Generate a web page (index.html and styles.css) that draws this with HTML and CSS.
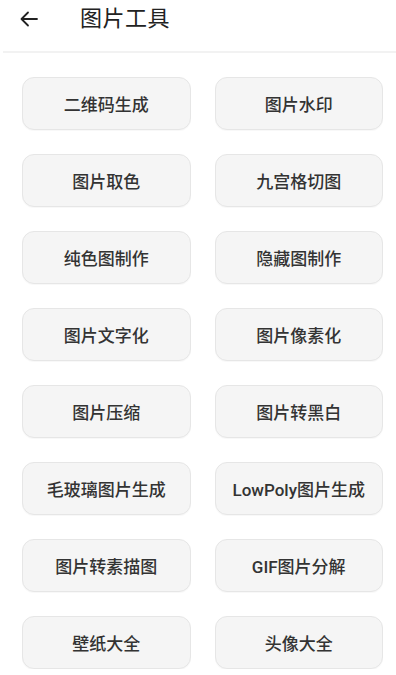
FILE: index.html
```html
<!DOCTYPE html>
<html lang="zh-CN">
<head>
<meta charset="utf-8">
<title>图片工具</title>
<link rel="stylesheet" href="styles.css">
</head>
<body>
<header class="topbar">
  <svg class="back" width="18" height="16" viewBox="0 0 18 16" aria-hidden="true">
    <path d="M17 8H2M8 1.5L1.5 8L8 14.5" fill="none" stroke="#222" stroke-width="1.8" stroke-linecap="round" stroke-linejoin="round"/>
  </svg>
  <h1 class="title">图片工具</h1>
</header>
<main class="grid">
  <button class="tool">二维码生成</button>
  <button class="tool">图片水印</button>
  <button class="tool">图片取色</button>
  <button class="tool">九宫格切图</button>
  <button class="tool">纯色图制作</button>
  <button class="tool">隐藏图制作</button>
  <button class="tool">图片文字化</button>
  <button class="tool">图片像素化</button>
  <button class="tool">图片压缩</button>
  <button class="tool">图片转黑白</button>
  <button class="tool">毛玻璃图片生成</button>
  <button class="tool">LowPoly图片生成</button>
  <button class="tool">图片转素描图</button>
  <button class="tool">GIF图片分解</button>
  <button class="tool">壁纸大全</button>
  <button class="tool">头像大全</button>
</main>
</body>
</html>
```

FILE: styles.css
```css
html, body {
  margin: 0;
  padding: 0;
  background: #ffffff;
  font-family: Roboto, "Noto Sans CJK SC", sans-serif;
}

.topbar {
  display: flex;
  align-items: center;
  padding-left: 20px;
  margin-left: 3px;
  border-bottom: 2px solid #f2f2f2;
  box-sizing: border-box;
  height: 53px;
  padding-bottom: 14px;
  padding-top: 0;
}

.back {
  display: block;
  margin-left: -3px;
  flex: none;
}

.title {
  margin: 0 0 0 42px;
  font-size: 22px;
  font-weight: 400;
  color: #222;
  line-height: 1;
  letter-spacing: 0.5px;
}

.grid {
  display: grid;
  grid-template-columns: 1fr 1fr;
  column-gap: 24px;
  row-gap: 24px;
  padding: 24px 13px 0 22px;
}

.tool {
  height: 53px;
  border: 1px solid #e6e6e6;
  border-radius: 12px;
  background: #f5f5f5;
  font-family: Roboto, "Noto Sans CJK SC", sans-serif;
  font-size: 17px;
  font-weight: 500;
  color: #333;
  padding: 0;
  box-shadow: 0 1px 1px rgba(0,0,0,0.03);
}
```
